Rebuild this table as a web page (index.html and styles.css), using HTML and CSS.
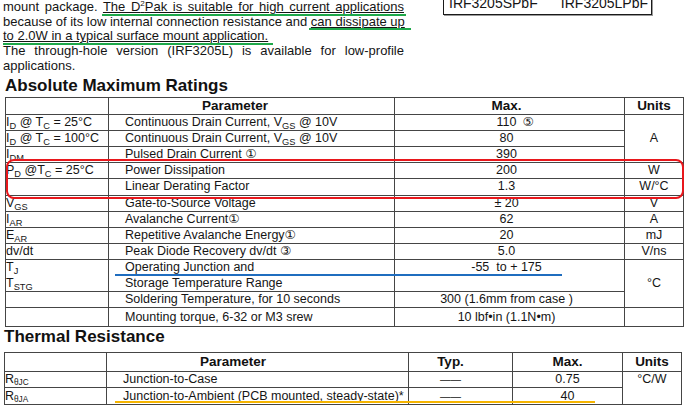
FILE: index.html
```html
<!DOCTYPE html>
<html>
<head>
<meta charset="utf-8">
<link rel="stylesheet" href="styles.css">
</head>
<body>
<div class="page">
  <div class="top">
    <p class="desc">
      <span class="ln j">mount package. <span class="hl">The D<sup>2</sup>Pak is suitable for high current applications</span></span>
      <span class="ln j">because of its low internal connection resistance and <span class="hl hl-b">can dissipate up</span></span>
      <span class="ln"><span class="hl hl-c">to 2.0W in a typical surface mount application.</span></span>
      <span class="ln j">The through-hole version (IRF3205L) is available for low-profile</span>
      <span class="ln">applications.</span>
    </p>
    <div class="partbox"><span>IRF3205SPbF</span><span>IRF3205LPbF</span></div>
  </div>

  <h2 class="sec-title sec-amr">Absolute Maximum Ratings</h2>
  <div class="tbl-wrap amr-wrap">
    <table class="spec amr">
      <colgroup><col class="w-sym"><col class="w-par"><col class="w-max"><col class="w-unit"></colgroup>
      <tr class="r-head"><th></th><th class="h-par">Parameter</th><th class="c-max">Max.</th><th class="c-unit">Units</th></tr>
      <tr><td class="c-sym">I<sub>D</sub> @ T<sub>C</sub> = 25°C</td><td class="c-par">Continuous Drain Current, V<sub>GS</sub> @ 10V</td><td class="c-max">110<span class="aside"><span class="circ">⑤</span></span></td><td class="c-unit" rowspan="3">A</td></tr>
      <tr><td class="c-sym">I<sub>D</sub> @ T<sub>C</sub> = 100°C</td><td class="c-par">Continuous Drain Current, V<sub>GS</sub> @ 10V</td><td class="c-max">80</td></tr>
      <tr><td class="c-sym">I<sub>DM</sub></td><td class="c-par">Pulsed Drain Current <span class="circ">①</span></td><td class="c-max">390</td></tr>
      <tr><td class="c-sym">P<sub>D</sub> @T<sub>C</sub> = 25°C</td><td class="c-par">Power Dissipation</td><td class="c-max">200</td><td class="c-unit">W</td></tr>
      <tr><td class="c-sym"></td><td class="c-par">Linear Derating Factor</td><td class="c-max">1.3</td><td class="c-unit">W/°C</td></tr>
      <tr><td class="c-sym">V<sub>GS</sub></td><td class="c-par">Gate-to-Source Voltage</td><td class="c-max">± 20</td><td class="c-unit">V</td></tr>
      <tr><td class="c-sym">I<sub>AR</sub></td><td class="c-par">Avalanche Current<span class="circ">①</span></td><td class="c-max">62</td><td class="c-unit">A</td></tr>
      <tr><td class="c-sym">E<sub>AR</sub></td><td class="c-par">Repetitive Avalanche Energy<span class="circ">①</span></td><td class="c-max">20</td><td class="c-unit">mJ</td></tr>
      <tr><td class="c-sym">dv/dt</td><td class="c-par">Peak Diode Recovery dv/dt <span class="circ">③</span></td><td class="c-max">5.0</td><td class="c-unit">V/ns</td></tr>
      <tr class="r-tj"><td class="c-sym">T<sub>J</sub><br>T<sub>STG</sub></td><td class="c-par">Operating Junction and<br>Storage Temperature Range</td><td class="c-max v-top">-55&nbsp; to + 175</td><td class="c-unit" rowspan="2">°C</td></tr>
      <tr class="r-sold"><td class="c-sym"></td><td class="c-par">Soldering Temperature, for 10 seconds</td><td class="c-max">300 (1.6mm from case )</td></tr>
      <tr class="r-last"><td class="c-sym"></td><td class="c-par">Mounting torque, 6-32 or M3 srew</td><td class="c-max">10 lbf•in (1.1N•m)</td><td class="c-unit"></td></tr>
    </table>
    <div class="mark mark-red"></div>
    <div class="mark mark-blue"></div>
  </div>

  <h2 class="sec-title sec-th">Thermal Resistance</h2>
  <div class="tbl-wrap th-wrap">
    <table class="spec th">
      <colgroup><col class="t-sym"><col class="t-par"><col class="t-typ"><col class="t-max"><col class="t-unit"></colgroup>
      <tr class="r-thead"><th></th><th class="h-par">Parameter</th><th class="c-typ">Typ.</th><th class="c-tmax">Max.</th><th class="c-unit">Units</th></tr>
      <tr class="r-t1"><td class="c-sym2">R<sub class="theta">θJC</sub></td><td class="c-par">Junction-to-Case</td><td class="c-typ"><span class="dash">——</span></td><td class="c-tmax">0.75</td><td class="c-unit v-top" rowspan="2">°C/W</td></tr>
      <tr class="r-t2"><td class="c-sym2">R<sub class="theta">θJA</sub></td><td class="c-par">Junction-to-Ambient (PCB mounted, steady-state)*</td><td class="c-typ"><span class="dash">——</span></td><td class="c-tmax">40</td></tr>
    </table>
    <div class="mark mark-orange"></div>
  </div>
</div>
</body>
</html>
```

FILE: styles.css
```css
html, body {
  margin: 0;
  padding: 0;
  background: #ffffff;
}
body {
  font-family: "Liberation Sans", Arial, sans-serif;
  color: #151515;
  overflow: hidden;
}
.page {
  width: 689px;
  height: 410px;
  overflow: hidden;
}

/* ---------- description ---------- */
.top {
  display: flex;
  align-items: flex-start;
}
.desc {
  margin: 0 0 0 3px;
  width: 401px;
  font-size: 13px;
  line-height: 14.7px;
}
.ln {
  display: block;
  white-space: nowrap;
}
.j {
  text-align: justify;
  text-align-last: justify;
}
.desc sup {
  font-size: 0.62em;
  line-height: 0;
  vertical-align: 5px;
}
.hl {
  position: relative;
  text-decoration: underline;
  text-decoration-thickness: 1px;
  text-underline-offset: 1px;
}
.hl::after {
  content: "";
  position: absolute;
  left: -1px;
  right: -2px;
  bottom: -1.5px;
  height: 2px;
  background: #1ea84a;
}
.hl-b::after { right: -6px; left: -2px; }
.hl-c::after { left: 0; right: -5px; }

.partbox {
  margin-left: 39px;
  margin-top: -9px;
  width: 209px;
  box-sizing: border-box;
  border: 1.5px solid #1a1a1a;
  display: flex;
  justify-content: space-between;
  padding: 3px 3px 3px 5px;
  font-size: 14px;
  line-height: 16px;
  box-shadow: 1px 1px 0 #9a9a9a;
}

/* ---------- section titles ---------- */
.sec-title {
  margin: 0;
  font-size: 17px;
  line-height: 20px;
  font-weight: bold;
  color: #111;
}
.sec-amr { margin: 2px 0 0 5px; }
.sec-th { margin: 0 0 0 4px; }

/* ---------- tables ---------- */
.tbl-wrap { position: relative; }
.amr-wrap { margin: 1px 0 0 5px; width: 679px; }
.th-wrap { margin: 4.5px 0 0 4px; width: 678px; }

.spec {
  border-collapse: separate;
  border-spacing: 0;
  table-layout: fixed;
  border-top: 1px solid #454545;
  border-left: 1px solid #454545;
  font-size: 12.5px;
  color: #151515;
}
.spec td, .spec th {
  border-right: 1px solid #454545;
  border-bottom: 1px solid #454545;
  padding: 0;
  line-height: 15.2px;
  white-space: nowrap;
  vertical-align: middle;
  overflow: visible;
}
.spec th {
  font-size: 13.5px;
  font-weight: bold;
  line-height: 16px;
  color: #111;
}
.amr { width: 679px; }
.th { width: 678px; }

.w-sym { width: 103px; }
.w-par { width: 286px; }
.w-max { width: 230px; }
.w-unit { width: 59px; }

.t-sym { width: 102px; }
.t-par { width: 302px; }
.t-typ { width: 104px; }
.t-max { width: 110px; }
.t-unit { width: 59px; }

.c-sym { padding-left: 3px; text-align: left; }
.c-sym2 { padding-left: 2px; text-align: left; }
.spec .c-par { padding-left: 16px; text-align: left; }
.spec .h-par { padding-left: 93px; text-align: left; }
.spec .c-max { text-align: center; padding-right: 6px; }
.spec .c-unit { text-align: center; }
.spec .c-typ { text-align: center; padding-right: 20px; }
.spec .c-tmax { text-align: center; }
.spec .v-top { vertical-align: top; }

.spec sub {
  font-size: 0.74em;
  line-height: 0;
  vertical-align: -3px;
}
.spec sub.theta {
  font-size: 0.66em;
  vertical-align: -1.5px;
}

.circ {
  font-family: "DejaVu Sans", sans-serif;
  font-size: 12.5px;
  line-height: 0;
}
.aside {
  display: inline-block;
  width: 0;
  white-space: nowrap;
}
.aside .circ { margin-left: 6px; }

.dash {
  font-size: 10.5px;
  letter-spacing: 0;
}

.r-tj td { line-height: 15.5px; }
.r-sold td { line-height: 15px; }
.r-last td { line-height: 18px; }

.r-thead th { line-height: 18px; }
.r-t1 td { line-height: 15px; }
.r-t2 td { line-height: 16px; }

/* ---------- annotation marks ---------- */
.mark { position: absolute; pointer-events: none; }
.mark-red {
  left: 0.5px;
  top: 62.5px;
  width: 678px;
  height: 39.5px;
  box-sizing: border-box;
  border: 2.5px solid #e8171c;
  border-radius: 8px;
}
.mark-blue {
  left: 110px;
  top: 177.5px;
  width: 447px;
  height: 2px;
  background: #1f6dbf;
}
.mark-orange {
  left: 111px;
  top: 49px;
  width: 480px;
  height: 2.5px;
  background: #f5b400;
}
```
